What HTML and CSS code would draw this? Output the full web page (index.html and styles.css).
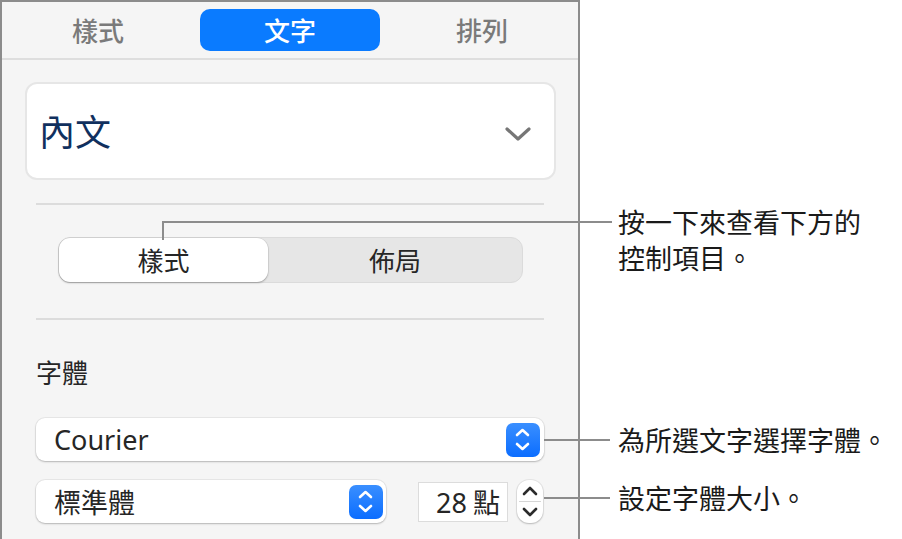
FILE: index.html
```html
<!DOCTYPE html>
<html lang="zh-Hant">
<head>
<meta charset="utf-8">
<title>文字</title>
<link rel="stylesheet" href="styles.css">
</head>
<body>
<div class="stage">
  <div class="panel">
    <div class="tabs">
      <div class="tab">樣式</div>
      <div class="tab active">文字</div>
      <div class="tab">排列</div>
    </div>

    <div class="card">
      <span class="card-title">內文</span>
      <svg class="card-chevron" width="26" height="16" viewBox="0 0 26 16"><polyline points="2,3 13,13 24,3" fill="none" stroke="#767676" stroke-width="3.2" stroke-linecap="round" stroke-linejoin="round"/></svg>
    </div>

    <div class="sep sep-1"></div>

    <div class="segmented">
      <div class="seg selected">樣式</div>
      <div class="seg">佈局</div>
    </div>

    <div class="sep sep-2"></div>

    <div class="label">字體</div>

    <div class="popup popup-font">
      <span class="popup-text latin">Courier</span>
      <span class="blue-btn">
        <svg width="34" height="34" viewBox="0 0 34 34"><polyline points="11,12 16.5,7 22,12" fill="none" stroke="#fff" stroke-width="2.6" stroke-linecap="round" stroke-linejoin="round"/><polyline points="11,21 16.5,26 22,21" fill="none" stroke="#fff" stroke-width="2.6" stroke-linecap="round" stroke-linejoin="round"/></svg>
      </span>
    </div>

    <div class="row">
      <div class="popup popup-style">
        <span class="popup-text">標準體</span>
        <span class="blue-btn">
          <svg width="34" height="34" viewBox="0 0 34 34"><polyline points="11,12 16.5,7 22,12" fill="none" stroke="#fff" stroke-width="2.6" stroke-linecap="round" stroke-linejoin="round"/><polyline points="11,21 16.5,26 22,21" fill="none" stroke="#fff" stroke-width="2.6" stroke-linecap="round" stroke-linejoin="round"/></svg>
        </span>
      </div>
      <div class="size-field"><span class="latin">28</span> 點</div>
      <div class="stepper">
        <svg width="26" height="43" viewBox="0 0 26 43"><polyline points="7,14 13,8 19,14" fill="none" stroke="#2b2b2b" stroke-width="2.6" stroke-linecap="round" stroke-linejoin="round"/><line x1="2" y1="21.5" x2="24" y2="21.5" stroke="#d6d6d6" stroke-width="1"/><polyline points="7,29 13,35 19,29" fill="none" stroke="#2b2b2b" stroke-width="2.6" stroke-linecap="round" stroke-linejoin="round"/></svg>
      </div>
    </div>
  </div>

  <div class="callouts">
    <p class="callout callout-seg">按一下來查看下方的<br>控制項目。</p>
    <p class="callout callout-font">為所選文字選擇字體。</p>
    <p class="callout callout-size">設定字體大小。</p>
  </div>
</div>
</body>
</html>
```

FILE: styles.css
```css
* { box-sizing: border-box; }

html, body {
  margin: 0;
  padding: 0;
  background: #ffffff;
}

body {
  font-family: "Noto Sans CJK TC", "Noto Sans", sans-serif;
  color: #262626;
}

.latin {
  font-family: "Noto Sans", "Noto Sans CJK TC", sans-serif;
}

.stage {
  width: 902px;
  height: 539px;
  overflow: hidden;
  display: flex;
  align-items: flex-start;
  position: relative;
}

/* ---------- panel ---------- */
.panel {
  width: 580px;
  flex: none;
  height: 560px;
  background: #f5f5f5;
  border: 2px solid #8c8c8c;
  border-bottom: none;
  display: flex;
  flex-direction: column;
}

.tabs {
  display: grid;
  grid-template-columns: repeat(3, 1fr);
  height: 58px;
  padding: 7px 0 7px;
  border-bottom: 2px solid #dedede;
}

.tab {
  margin: 0 6px;
  height: 42px;
  line-height: 42px;
  text-align: center;
  font-size: 26px;
  font-weight: 500;
  color: #7a7a7a;
  border-radius: 10px;
}

.tab.active {
  background: #0a7bff;
  color: #ffffff;
}

.card {
  margin: 22px 22px 0 23px;
  height: 98px;
  background: #ffffff;
  border: 2px solid #e6e6e6;
  border-radius: 12px;
  display: flex;
  align-items: center;
  justify-content: space-between;
  padding: 0 23px 0 12px;
}

.card-title {
  font-size: 36px;
  line-height: 40px;
  color: #10305e;
  margin-top: -2px;
}

.card-chevron {
  margin-top: 6px;
}

.sep {
  height: 2px;
  background: #dcdcdc;
  margin: 0 34px;
}

.sep-1 { margin-top: 23px; }
.sep-2 { margin-top: 35px; }

.segmented {
  margin: 32px 0 0 56px;
  width: 465px;
  height: 46px;
  background: #e6e6e6;
  border: 1px solid #dbdbdb;
  border-radius: 12px;
  display: flex;
}

.seg {
  flex: 1;
  text-align: center;
  font-size: 26px;
  line-height: 44px;
  color: #262626;
}

.seg.selected {
  flex: none;
  width: 209px;
  background: #ffffff;
  border-radius: 11px;
  box-shadow: 0 1px 2px rgba(0, 0, 0, 0.28), 0 0 0 0.5px rgba(0, 0, 0, 0.08);
}

.label {
  margin: 34px 0 0 34px;
  font-size: 26px;
  line-height: 36px;
  color: #262626;
}

.popup {
  height: 43px;
  background: #ffffff;
  border-radius: 9px;
  box-shadow: 0 1px 2px rgba(0, 0, 0, 0.22), 0 0 0 1px rgba(0, 0, 0, 0.05);
  display: flex;
  align-items: center;
  justify-content: space-between;
  padding: 0 4px 0 18px;
}

.popup-font {
  margin: 28px 34px 0;
}

.popup-text {
  font-size: 27px;
  line-height: 36px;
  color: #262626;
}

.blue-btn {
  width: 34px;
  height: 34px;
  border-radius: 7px;
  background: linear-gradient(#3a8fff, #0b6dff);
  display: flex;
}

.row {
  margin: 19px 34px 0;
  display: flex;
  align-items: center;
}

.popup-style {
  width: 350px;
  padding-right: 3px;
}

.size-field {
  margin-left: 32px;
  width: 90px;
  height: 40px;
  background: #ffffff;
  border: 1px solid #dcdcdc;
  text-align: right;
  padding-right: 7px;
  font-size: 27px;
  line-height: 38px;
  color: #262626;
}

.stepper {
  margin-left: 9px;
  width: 26px;
  height: 43px;
  background: #ffffff;
  border-radius: 12px;
  box-shadow: 0 1px 2px rgba(0, 0, 0, 0.2), 0 0 0 1px rgba(0, 0, 0, 0.06);
  display: flex;
}

/* ---------- callouts ---------- */
.callouts {
  padding-left: 38px;
  display: flex;
  flex-direction: column;
}

.callout {
  position: relative;
  margin: 0;
  font-size: 27px;
  line-height: 36px;
  color: #1a1a1a;
  white-space: nowrap;
}

.callout::before {
  content: "";
  position: absolute;
  top: 17px;
  border-top: 2px solid #8c8c8c;
}

.callout-seg { margin-top: 204px; }
.callout-seg::before {
  left: -456px;
  width: 448px;
  height: 17px;
  border-left: 2px solid #8c8c8c;
}

.callout-font { margin-top: 146px; }
.callout-font::before {
  left: -74px;
  width: 66px;
}

.callout-size { margin-top: 22px; }
.callout-size::before {
  left: -74px;
  width: 66px;
}
```
